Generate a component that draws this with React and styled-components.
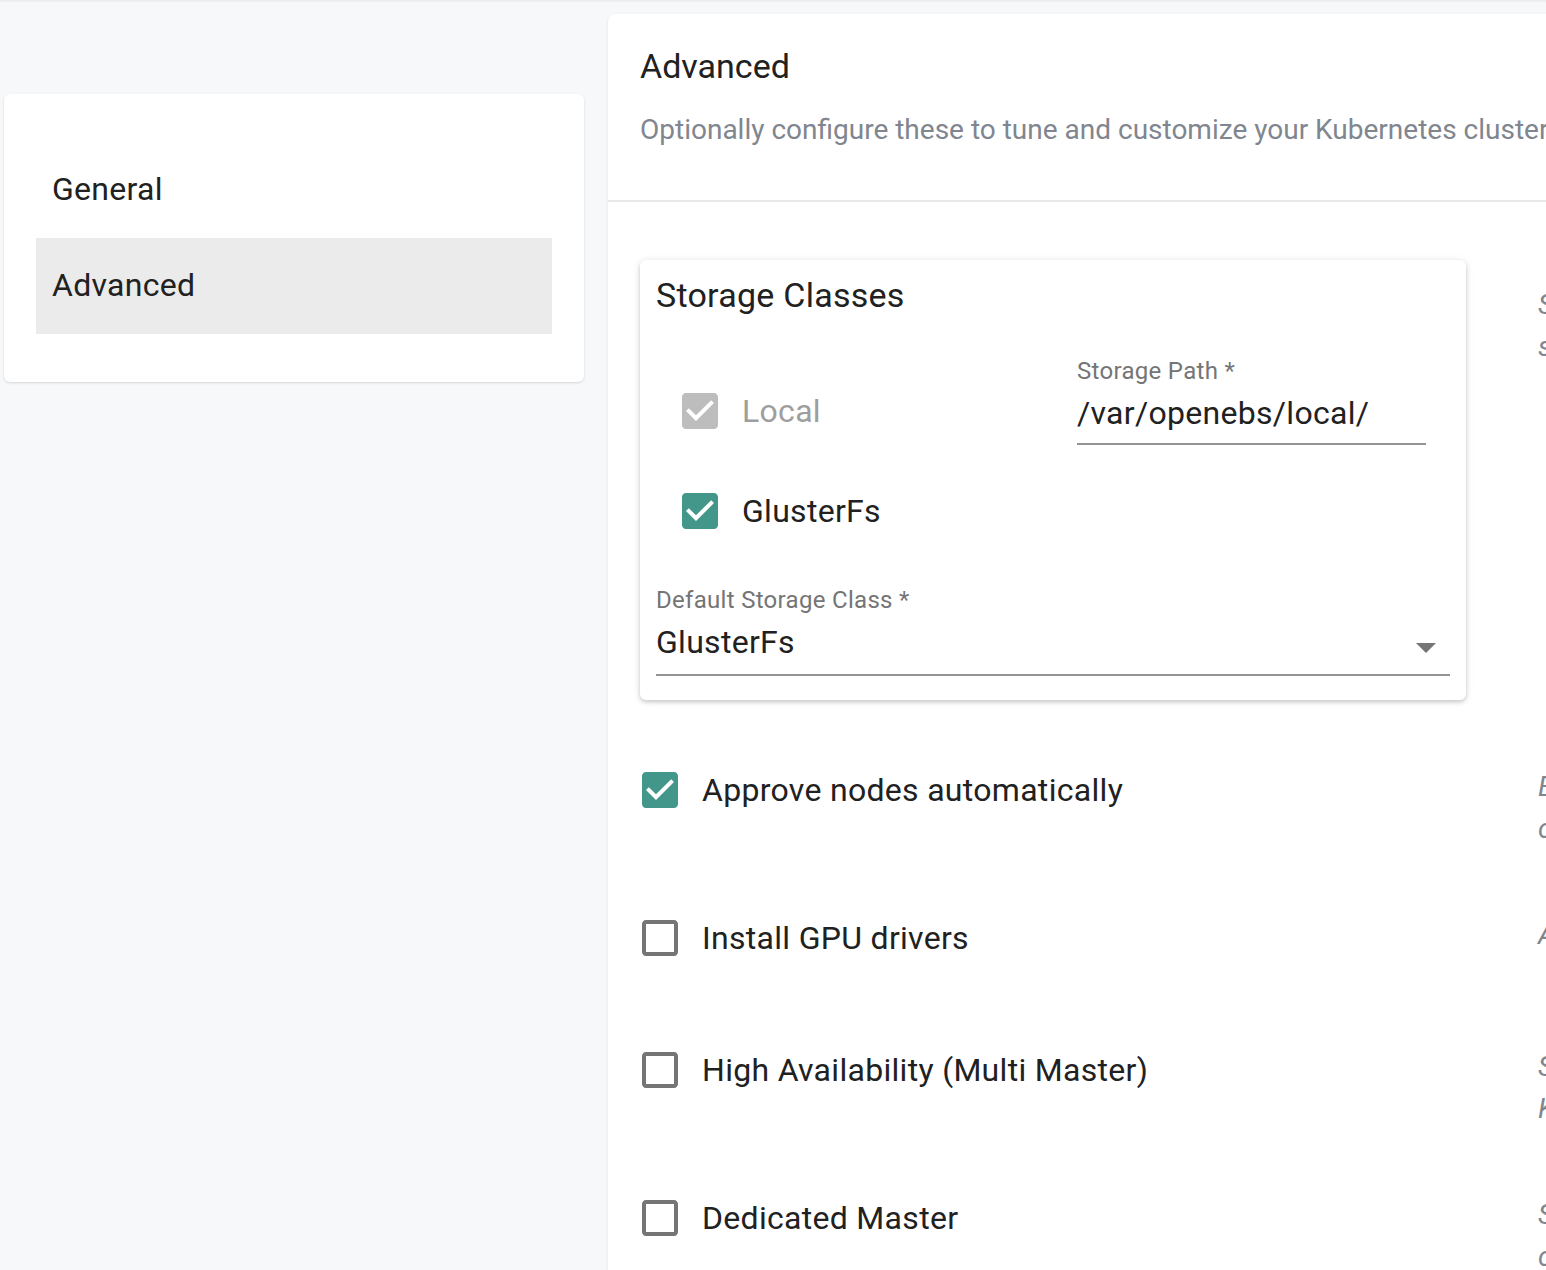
import React from "react";
import styled, { createGlobalStyle } from "styled-components";

const GlobalStyle = createGlobalStyle`
  html, body {
    margin: 0;
    padding: 0;
    overflow: hidden;
    background: #f7f8fa;
    font-family: Roboto, "Liberation Sans", Arial, sans-serif;
    color: #212121;
  }
`;

const TEAL = "#42978a";

const sections = ["General", "Advanced"];

const storageClasses = [
  { label: "Local", checked: true, disabled: true },
  { label: "GlusterFs", checked: true },
];

const options = [
  {
    label: "Approve nodes automatically",
    checked: true,
    height: 148,
    desc: [
      "Enable this to have nodes join the cluster without manual approval,",
      "cluster admins can still remove nodes at any time later on.",
    ],
  },
  {
    label: "Install GPU drivers",
    checked: false,
    height: 132,
    desc: ["Automatically install the GPU drivers on nodes that have them."],
  },
  {
    label: "High Availability (Multi Master)",
    checked: false,
    height: 148,
    desc: [
      "Spin up three master nodes instead of one for a resilient",
      "Kubernetes control plane.",
    ],
  },
  {
    label: "Dedicated Master",
    checked: false,
    height: 148,
    desc: [
      "Schedule workloads only on worker nodes and keep the",
      "control plane isolated.",
    ],
  },
];

export default function App() {
  return (
    <>
      <GlobalStyle />
      <Page>
        <NavCard>
          {sections.map((s) => (
            <NavItem key={s} $active={s === "Advanced"}>
              {s}
            </NavItem>
          ))}
        </NavCard>

        <MainCard>
          <CardHeader>
            <Title>Advanced</Title>
            <Subtitle>
              Optionally configure these to tune and customize your Kubernetes cluster
            </Subtitle>
          </CardHeader>

          <Content>
            <FieldRow $height={496}>
              <StorageCard>
                <CardTitle>Storage Classes</CardTitle>
                <ClassGrid>
                  <Cell>
                    {storageClasses.map((c) => (
                      <ClassItem key={c.label}>
                        <CheckLabel label={c.label} checked={c.checked} disabled={c.disabled} />
                      </ClassItem>
                    ))}
                  </Cell>
                  <Cell>
                    <FieldLabel>Storage Path *</FieldLabel>
                    <InputValue>/var/openebs/local/</InputValue>
                  </Cell>
                </ClassGrid>
                <SelectField>
                  <FieldLabel>Default Storage Class *</FieldLabel>
                  <SelectValue>
                    <span>GlusterFs</span>
                    <svg width="48" height="48" viewBox="0 0 24 24">
                      <path d="M7 10l5 5 5-5z" fill="#757575" />
                    </svg>
                  </SelectValue>
                </SelectField>
              </StorageCard>
              <Description $top={24}>
                <div>Select the storage classes to provision in the cluster and</div>
                <div>set which one is used by default.</div>
              </Description>
            </FieldRow>

            {options.map((o) => (
              <FieldRow key={o.label} $height={o.height}>
                <CheckLabel label={o.label} checked={o.checked} />
                <Description $top={10}>
                  {o.desc.map((line) => (
                    <div key={line}>{line}</div>
                  ))}
                </Description>
              </FieldRow>
            ))}
          </Content>
        </MainCard>
      </Page>
    </>
  );
}

function CheckLabel({ label, checked, disabled }) {
  const color = disabled ? "#bdbdbd" : checked ? TEAL : "#757575";
  return (
    <CheckRow>
      <svg width="48" height="48" viewBox="0 0 24 24">
        {checked ? (
          <path
            fill={color}
            d="M19 3H5c-1.11 0-2 .9-2 2v14c0 1.1.89 2 2 2h14c1.11 0 2-.9 2-2V5c0-1.1-.89-2-2-2zm-9 14l-5-5 1.41-1.41L10 14.17l7.59-7.59L19 8l-9 9z"
          />
        ) : (
          <path
            fill={color}
            d="M19 5v14H5V5h14m0-2H5c-1.1 0-2 .9-2 2v14c0 1.1.9 2 2 2h14c1.1 0 2-.9 2-2V5c0-1.1-.9-2-2-2z"
          />
        )}
      </svg>
      <CheckText $disabled={disabled}>{label}</CheckText>
    </CheckRow>
  );
}

const Page = styled.div`
  display: flex;
  align-items: flex-start;
  gap: 24px;
  padding: 14px 0 0 4px;
  min-height: 1270px;
  box-sizing: border-box;
  box-shadow: inset 0 3px 3px -2px rgba(0, 0, 0, 0.08);
`;

const NavCard = styled.div`
  flex: 0 0 580px;
  margin-top: 80px;
  padding: 48px 32px;
  box-sizing: border-box;
  background: #fff;
  border-radius: 6px;
  box-shadow: 0 1px 3px rgba(0, 0, 0, 0.1), 0 1px 2px rgba(0, 0, 0, 0.04);
`;

const NavItem = styled.div`
  height: 96px;
  display: flex;
  align-items: center;
  padding-left: 16px;
  padding-bottom: 2px;
  box-sizing: border-box;
  font-size: 32px;
  letter-spacing: 0.3px;
  color: #212121;
  background: ${(p) => (p.$active ? "#ebebeb" : "transparent")};
`;

const MainCard = styled.div`
  flex: 0 0 1500px;
  background: #fff;
  border-radius: 8px;
  box-shadow: 0 1px 3px rgba(0, 0, 0, 0.1);
  min-height: 1300px;
`;

const CardHeader = styled.div`
  padding: 32px 32px 50px;
  border-bottom: 2px solid #e8e8e8;
`;

const Title = styled.div`
  font-size: 34px;
  line-height: 40px;
  color: #212121;
`;

const Subtitle = styled.div`
  margin-top: 24px;
  font-size: 28px;
  line-height: 40px;
  color: #80868f;
  white-space: nowrap;
`;

const Content = styled.div`
  padding: 58px 32px 0;
`;

const FieldRow = styled.div`
  display: grid;
  grid-template-columns: 826px 1fr;
  column-gap: 72px;
  align-items: start;
  height: ${(p) => p.$height}px;
`;

const Description = styled.div`
  padding-top: ${(p) => p.$top}px;
  font-size: 28px;
  line-height: 42px;
  font-style: italic;
  color: #80868f;
  white-space: nowrap;
`;

const StorageCard = styled.div`
  padding: 15px 16px 24px;
  background: #fff;
  border-radius: 6px;
  box-shadow: 0 2px 4px rgba(0, 0, 0, 0.18), 0 1px 10px rgba(0, 0, 0, 0.08);
`;

const CardTitle = styled.div`
  font-size: 34px;
  line-height: 40px;
  letter-spacing: 0.25px;
  color: #212121;
`;

const ClassGrid = styled.div`
  display: grid;
  grid-template-columns: 1fr 1fr;
  margin-top: 22px;
`;

const Cell = styled.div`
  padding: 24px;
`;

const ClassItem = styled.div`
  height: 100px;
  display: flex;
  align-items: center;
`;

const CheckRow = styled.label`
  display: flex;
  align-items: center;
  height: 68px;
  margin-left: -4px;
  svg {
    flex: 0 0 48px;
  }
`;

const CheckText = styled.span`
  margin-left: 18px;
  font-size: 32px;
  letter-spacing: 0.3px;
  color: ${(p) => (p.$disabled ? "#9e9e9e" : "#212121")};
  white-space: nowrap;
`;

const FieldLabel = styled.div`
  font-size: 24px;
  line-height: 20px;
  letter-spacing: 0.3px;
  color: #757575;
`;

const InputValue = styled.div`
  margin-top: 12px;
  padding-bottom: 10px;
  font-size: 32px;
  line-height: 40px;
  letter-spacing: 0.3px;
  color: #212121;
  border-bottom: 2px solid #949494;
`;

const SelectField = styled.div`
  padding-top: 5px;
`;

const SelectValue = styled.div`
  display: flex;
  align-items: center;
  justify-content: space-between;
  margin-top: 12px;
  padding-bottom: 12px;
  height: 40px;
  font-size: 32px;
  line-height: 40px;
  letter-spacing: 0.3px;
  color: #212121;
  border-bottom: 2px solid #949494;
  svg {
    margin-top: 10px;
  }
`;
